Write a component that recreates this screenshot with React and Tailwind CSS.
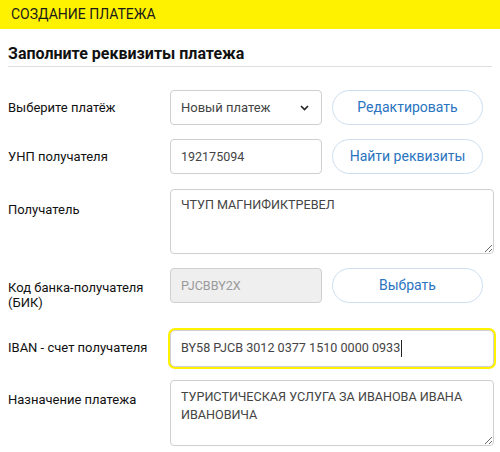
const Row = ({ label, top = 'pt-[10px]', className = '', children }) => (
  <div className={`flex items-start ${className}`}>
    <div className={`w-[170px] shrink-0 pl-[8px] pr-2 text-[13px] leading-[15px] text-[#111] ${top}`}>{label}</div>
    <div className="flex flex-1 gap-[10px] pr-[6px]">{children}</div>
  </div>
);

const fieldCls =
  'h-[35px] rounded-[4px] border border-[#cfcfcf] px-[10px] outline-none';

const PillButton = ({ children }) => (
  <button
    type="button"
    className="h-[35px] w-[151px] shrink-0 rounded-full border border-[#cddff0] bg-white text-[14px] text-[#2a74c0]"
  >
    {children}
  </button>
);

const App = () => {
  return (
    <div className="min-h-[452px] w-[500px] bg-white" style={{ fontFamily: 'Roboto, "Liberation Sans", sans-serif' }}>
      <div className="flex h-[29px] items-center bg-[#fff200] px-[11px] text-[14px] text-[#1a1a1a]">
        СОЗДАНИЕ ПЛАТЕЖА
      </div>
      <div className="mx-[8px] mt-[16px] border-b border-[#dedede] pb-[3px]">
        <h1 className="text-[16px] font-bold leading-[18px] text-[#111]">Заполните реквизиты платежа</h1>
      </div>

      <div className="mt-[23px] flex flex-col">
        <Row label="Выберите платёж">
          <div className={`${fieldCls} flex w-[152px] items-center justify-between bg-white text-[13px] text-[#444]`}>
            <span>Новый платеж</span>
            <svg width="9" height="6" viewBox="0 0 9 6" className="mr-[2px]">
              <path d="M1 1l3.5 3.5L8 1" fill="none" stroke="#222" strokeWidth="1.6" />
            </svg>
          </div>
          <PillButton>Редактировать</PillButton>
        </Row>

        <Row label="УНП получателя" className="mt-[14px]">
          <input className={`${fieldCls} w-[152px] bg-white text-[12.5px] text-[#444]`} defaultValue="192175094" readOnly />
          <PillButton>Найти реквизиты</PillButton>
        </Row>

        <Row label="Получатель" className="mt-[15px]" top="pt-[13px]">
          <textarea
            className="h-[65px] flex-1 rounded-[4px] border border-[#cfcfcf] bg-white px-[10px] py-[6px] text-[12.6px] leading-[18px] text-[#444] outline-none"
            defaultValue="ЧТУП МАГНИФИКТРЕВЕЛ"
            readOnly
          />
        </Row>

        <Row label="Код банка-получателя (БИК)" className="mt-[14px]" top="pt-[12px]">
          <input className={`${fieldCls} w-[152px] bg-[#efefef] text-[12.6px] text-[#9a9a9a]`} defaultValue="PJCBBY2X" readOnly />
          <PillButton>Выбрать</PillButton>
        </Row>

        <Row label="IBAN - счет получателя" className="mt-[20px]" top="pt-[10px]">
          <div className="flex h-[37px] flex-1 items-center rounded-[5px] border border-[#cfcfcf] bg-white px-[10px] text-[12.6px] text-[#444] shadow-[0_0_0_2px_#fff200]">
            <span>BY58 PJCB 3012 0377 1510 0000 0933</span>
            <span className="ml-[1px] inline-block h-[17px] w-px bg-[#222]" />
          </div>
        </Row>

        <Row label="Назначение платежа" className="mt-[13px]" top="pt-[12px]">
          <textarea
            className="h-[66px] flex-1 rounded-[4px] border border-[#cfcfcf] bg-white px-[10px] py-[7px] text-[12.6px] leading-[18px] text-[#444] outline-none"
            defaultValue="ТУРИСТИЧЕСКАЯ УСЛУГА ЗА ИВАНОВА ИВАНА ИВАНОВИЧА"
            readOnly
          />
        </Row>
      </div>
    </div>
  );
};

export default App;
